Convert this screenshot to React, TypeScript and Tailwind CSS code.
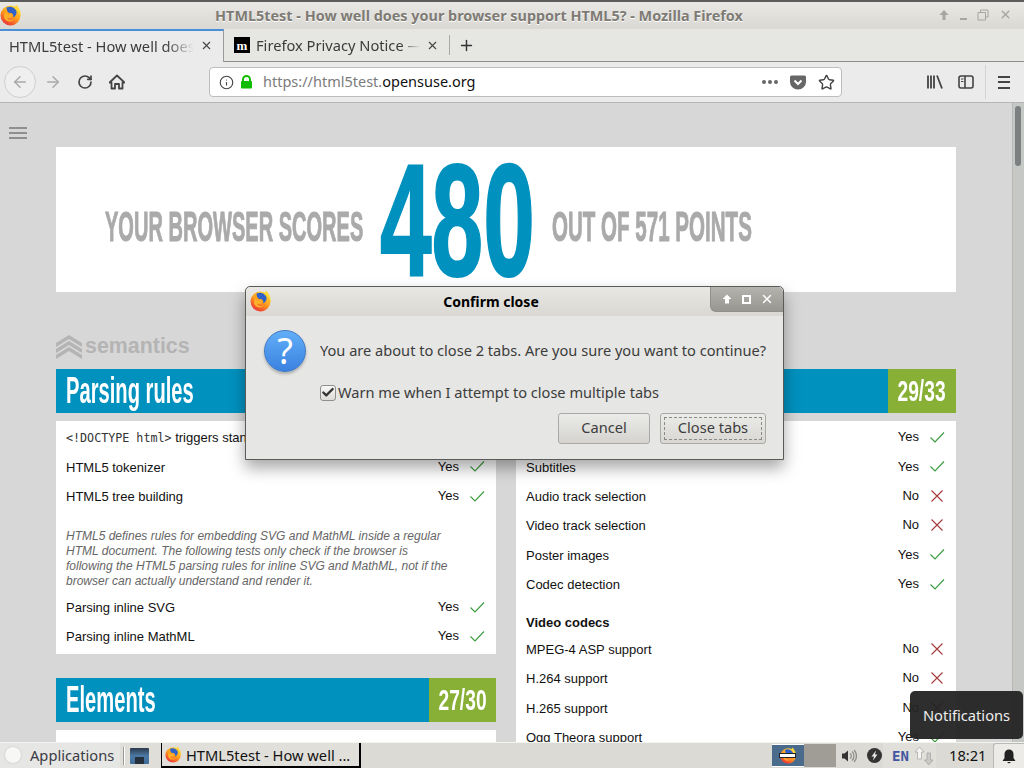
import { ArrowLeft, ArrowRight, RotateCw, Info, Star, Plus, X, Check } from "lucide-react";

const uiFont = "font-['Noto_Sans','Open_Sans',sans-serif]";
const pageFont = "font-['Liberation_Sans',Arial,sans-serif]";

const videoRows: [string, boolean][] = [
  ["Video element", true],
  ["Subtitles", true],
  ["Audio track selection", false],
  ["Video track selection", false],
  ["Poster images", true],
  ["Codec detection", true],
];

const codecRows: [string, boolean][] = [
  ["MPEG-4 ASP support", false],
  ["H.264 support", false],
  ["H.265 support", false],
  ["Ogg Theora support", true],
];

function FirefoxLogo({ size = 22 }: { size?: number }) {
  return (
    <svg width={size} height={size} viewBox="0 0 22 22">
      <defs>
        <linearGradient id="fxOuter" x1="0.8" y1="0" x2="0.2" y2="1">
          <stop offset="0" stopColor="#ffe03a" />
          <stop offset="0.5" stopColor="#ff9a1c" />
          <stop offset="1" stopColor="#e8263c" />
        </linearGradient>
      </defs>
      <circle cx="10.5" cy="11.5" r="10" fill="url(#fxOuter)" />
      <path d="M16 0.5 C18.5 3 21.5 7 20.5 12 C19.5 8 17.5 5.5 14.5 4 Z" fill="#ffd93a" />
      <path d="M6.5 3.5 C10 1.8 14.5 3 16.5 7 C17 10 15.5 12.5 13 13.5 C14 11 12.5 9 10 9 C8 9 6.5 7 6.5 3.5 Z" fill="#2f62c8" />
      <path d="M5 8 C6.5 10 8.5 10.5 10.5 10.5 C12 10.5 12.5 12 11.5 13 C10 14.5 8 14 7 13.5 C8 16 11 17 14 15.5 C11.5 18.5 6.5 18 4.5 14.5 C3.8 12.5 4 10 5 8 Z" fill="#ffb02a" />
    </svg>
  );
}

function ResultMark({ ok }: { ok: boolean }) {
  return ok ? (
    <svg width="16" height="16" viewBox="0 0 16 16" className="ml-[10px] shrink-0">
      <path d="M1.5 8.5 L6 13 L15 3.5" fill="none" stroke="#3a9a3e" strokeWidth="1.1" />
    </svg>
  ) : (
    <svg width="16" height="16" viewBox="0 0 16 16" className="ml-[10px] shrink-0">
      <path d="M2.5 2.5 L13.5 13.5 M13.5 2.5 L2.5 13.5" fill="none" stroke="#a23a3a" strokeWidth="1.1" />
    </svg>
  );
}

function TestRow({ label, ok, mono }: { label: string; ok: boolean; mono?: boolean }) {
  return (
    <div className="flex h-[29.3px] items-center pl-[10px] pr-[11px] text-[13px] text-[#111]">
      <div className="flex-1 whitespace-nowrap">
        {mono ? (
          <>
            <code className="font-['DejaVu_Sans_Mono',monospace] text-[11.7px] text-[#333]">&lt;!DOCTYPE html&gt;</code> triggers standards mode
          </>
        ) : (
          label
        )}
      </div>
      <div className="relative -top-px flex items-center">
        <span>{ok ? "Yes" : "No"}</span>
        <ResultMark ok={ok} />
      </div>
    </div>
  );
}

function SectionHeader({ title, score, scoreWidth }: { title: string; score: string; scoreWidth: string }) {
  return (
    <div className="flex h-11 bg-[#0091bf] text-white">
      <div className="flex-1 overflow-hidden pl-[10px]">
        <div className="origin-left scale-x-[0.56] whitespace-nowrap text-[36px] font-bold leading-[44px]">{title}</div>
      </div>
      <div className={`${scoreWidth} flex items-center justify-center overflow-hidden bg-[#89b036]`}>
        <span className="scale-x-[0.64] whitespace-nowrap text-[30px] font-bold leading-[44px]">{score}</span>
      </div>
    </div>
  );
}

function TitleButtons() {
  return (
    <div className="flex items-center gap-[10px] pr-[12px] text-[#a9a69f]">
      <svg width="12" height="12" viewBox="0 0 12 12">
        <path d="M6 1 L10.5 6 H7.5 V11 H4.5 V6 H1.5 Z" fill="currentColor" />
      </svg>
      <div className="mt-[9px] h-[2px] w-[7px] bg-current" />
      <svg width="12" height="12" viewBox="0 0 12 12">
        <path d="M3.5 3 V1 H11 V8 H8.5 M1 3.5 H8.5 V11 H1 Z" fill="none" stroke="currentColor" />
      </svg>
      <X size={13} strokeWidth={2.5} />
    </div>
  );
}

function ConfirmDialog() {
  return (
    <div className={`${uiFont} absolute left-[245px] top-[286px] h-[174px] w-[539px] rounded-t-[5px] border border-[#5a5a58] bg-[#e6e6e4] shadow-[0_8px_16px_rgba(0,0,0,0.35)]`}>
      <div className="relative flex h-[29px] items-center justify-center rounded-t-[5px] bg-gradient-to-b from-[#e8e7e3] to-[#d9d8d3]">
        <div className="absolute left-[4px] top-[3px]">
          <FirefoxLogo size={22} />
        </div>
        <span className="-ml-[47px] text-[14px] font-bold text-black">Confirm close</span>
        <div className="absolute right-0 top-0 flex h-[25px] w-[73px] items-center justify-center gap-[9px] rounded-bl-[6px] rounded-tr-[5px] border-b border-l border-[#8f8f8b] bg-gradient-to-b from-[#b4b3ae] to-[#97968f] text-white">
          <svg width="12" height="12" viewBox="0 0 12 12">
            <path d="M6 1.5 L10.5 6 H8 V10.5 H4 V6 H1.5 Z" fill="currentColor" />
          </svg>
          <div className="h-[9px] w-[9px] border-2 border-white" />
          <X size={14} strokeWidth={2.5} />
        </div>
      </div>
      <div className="flex items-start pl-[18px] pr-[16px] pt-[14px]">
        <div className="flex h-[42px] w-[42px] shrink-0 items-center justify-center rounded-full border border-[#3f79c4] bg-gradient-to-b from-[#62aef8] to-[#3b82e0] shadow-[0_2px_3px_rgba(0,0,0,0.25)]">
          <span className="text-[36px] font-normal leading-none text-white">?</span>
        </div>
        <div className="ml-[14px] whitespace-nowrap pt-[10px] text-[14.6px] leading-[20px] text-[#3c3c3c]">
          You are about to close 2 tabs. Are you sure you want to continue?
        </div>
      </div>
      <div className="mt-[10px] flex items-center pl-[74px] text-[14.6px] text-[#3c3c3c]">
        <div className="flex h-[16px] w-[16px] items-center justify-center rounded-[3px] border border-[#8f8f8b] bg-gradient-to-b from-[#f8f8f7] to-[#dddcd8]">
          <Check size={15} strokeWidth={4} className="text-[#333]" />
        </div>
        <span className="ml-[2px]">Warn me when I attempt to close multiple tabs</span>
      </div>
      <div className="mt-[9px] flex justify-end gap-[10px] pr-[17px] text-[14.6px] text-[#3c3c3c]">
        <div className="flex h-[31px] w-[92px] items-center justify-center rounded-[3px] border border-[#aaa9a5] bg-gradient-to-b from-[#ebebe9] to-[#d4d3cf]">Cancel</div>
        <div className="flex h-[31px] w-[106px] items-center justify-center rounded-[3px] border border-[#aaa9a5] bg-gradient-to-b from-[#ebebe9] to-[#d8d7d3] p-[3px]">
          <div className="flex h-full w-full items-center justify-center border border-dashed border-[#8a8a86]">Close tabs</div>
        </div>
      </div>
    </div>
  );
}

function Chrome() {
  return (
    <div className={uiFont}>
      {/* window title */}
      <div className="relative flex h-[29px] items-center justify-center border-t-2 border-[#5c5c5a] bg-gradient-to-b from-[#e9e8e4] to-[#d9d8d3]">
        <div className="absolute left-0 top-[2px]">
          <FirefoxLogo size={22} />
        </div>
        <span className="-ml-[66px] text-[14.4px] font-bold text-[#7e7a74] [text-shadow:0_1px_0_#fff]">
          HTML5test - How well does your browser support HTML5? - Mozilla Firefox
        </span>
        <div className="absolute right-0 top-[6px]">
          <TitleButtons />
        </div>
      </div>

      {/* tabs */}
      <div className="flex h-[33px] bg-[#e6e6e3] text-[14.67px] text-[#3b3b3b]">
        <div className="flex w-[224px] items-center border-r border-t-2 border-r-[#9a9a98] border-t-[#4a90d9] bg-[#ebebeb] pb-[2px] pl-[9px] pr-[10px]">
          <span className="min-w-0 flex-1 overflow-hidden whitespace-nowrap [mask-image:linear-gradient(to_right,black_85%,transparent)]">HTML5test - How well does</span>
          <X size={13} strokeWidth={2} className="ml-[6px] shrink-0 text-[#444]" />
        </div>
        <div className="flex w-[225px] items-center border-b border-[#8e8e8c] pl-[10px] pr-[10px]">
          <div className="flex h-[16px] w-[16px] shrink-0 items-center justify-center bg-black font-['Liberation_Serif',serif] text-[13px] font-bold leading-none text-white">m</div>
          <span className="ml-[6px] min-w-0 flex-1 overflow-hidden whitespace-nowrap [mask-image:linear-gradient(to_right,black_88%,transparent)]">Firefox Privacy Notice —</span>
          <X size={13} strokeWidth={2} className="ml-[6px] shrink-0 text-[#444]" />
        </div>
        <div className="flex flex-1 items-center border-b border-[#8e8e8c]">
          <div className="h-[20px] w-px bg-[#a8a8a6]" />
          <Plus size={17} strokeWidth={2} className="ml-[8px] text-[#333]" />
        </div>
      </div>

      {/* nav bar */}
      <div className="flex h-[41px] items-center border-b border-[#b5b5b3] bg-[#ebebeb]">
        <div className="ml-[4px] flex h-[32px] w-[32px] items-center justify-center rounded-full border border-[#cfcfcd] bg-[#efefef]">
          <ArrowLeft size={18} className="text-[#a9a9a9]" />
        </div>
        <ArrowRight size={18} className="ml-[8px] text-[#a9a9a9]" />
        <RotateCw size={16} strokeWidth={2.5} className="ml-[15px] text-[#444]" />
        <svg width="16" height="16" viewBox="0 0 16 16" className="ml-[16px]">
          <path d="M8 1.5 L15.5 8.5 H13.5 V14.5 H10 V10 H6 V14.5 H2.5 V8.5 H0.5 Z" fill="none" stroke="#444" strokeWidth="1.8" strokeLinejoin="round" />
        </svg>
        <div className="ml-[84px] flex h-[30px] w-[633px] items-center rounded-[4px] border border-[#bdbdbb] bg-white pl-[9px] pr-[6px] text-[14.5px]">
          <Info size={15} strokeWidth={1.8} className="text-[#444]" />
          <svg width="13" height="14" viewBox="0 0 13 14" className="ml-[6px]">
            <path d="M3 6 V4.5 A3.5 3.5 0 0 1 10 4.5 V6" fill="none" stroke="#12bc00" strokeWidth="2" />
            <rect x="1" y="6" width="11" height="7.5" rx="1" fill="#12bc00" />
          </svg>
          <span className="ml-[10px] text-[#7c7c7c]">https://html5test.</span>
          <span className="text-[#111]">opensuse.org</span>
          <div className="flex-1" />
          <div className="flex gap-[2px]">
            <div className="h-[4px] w-[4px] rounded-full bg-[#666]" />
            <div className="h-[4px] w-[4px] rounded-full bg-[#666]" />
            <div className="h-[4px] w-[4px] rounded-full bg-[#666]" />
          </div>
          <svg width="16" height="15" viewBox="0 0 16 15" className="ml-[12px]">
            <path d="M1.5 0.5 H14.5 A1.5 1.5 0 0 1 16 2 V7 A8 7.5 0 0 1 0 7 V2 A1.5 1.5 0 0 1 1.5 0.5 Z" fill="#666" />
            <path d="M4.5 5.5 L8 9 L11.5 5.5" fill="none" stroke="#fff" strokeWidth="2" />
          </svg>
          <Star size={17} strokeWidth={2} className="ml-[12px] text-[#444]" />
        </div>
        <svg width="16" height="16" viewBox="0 0 16 16" className="ml-[85px]">
          <path d="M1 1.5 V14.5 M4 1.5 V14.5 M7 1.5 V14.5 M10 1.5 L15 14.5" fill="none" stroke="#444" strokeWidth="1.8" />
        </svg>
        <svg width="16" height="14" viewBox="0 0 16 14" className="ml-[15px]">
          <rect x="1" y="1" width="14" height="12" rx="2" fill="none" stroke="#444" strokeWidth="1.6" />
          <path d="M7 1 V13" stroke="#444" strokeWidth="1.6" />
          <path d="M3 4 H5.5 M3 6.5 H5.5" stroke="#444" strokeWidth="1.2" />
        </svg>
        <div className="ml-[11px] h-[34px] w-px bg-[#d4d4d2]" />
        <div className="ml-[12px] flex flex-col gap-[3.5px]">
          <div className="h-[2px] w-[12px] bg-[#444]" />
          <div className="h-[2px] w-[12px] bg-[#444]" />
          <div className="h-[2px] w-[12px] bg-[#444]" />
        </div>
      </div>
    </div>
  );
}

function Taskbar() {
  return (
    <div className={`${uiFont} flex h-[26px] border-t border-[#f3f3f1] bg-[#dcdad5] text-[14.67px]`}>
      <div className="flex w-[120px] items-center bg-[#e6e6e4] pb-[1px] pl-[5px] text-[#3a3a44]">
        <div className="h-[16px] w-[16px] rounded-full bg-[#f7f7f5] shadow-[0_0_2px_#bbb]" />
        <span className="ml-[9px]">Applications</span>
      </div>
      <div className="flex w-[41px] items-center bg-[#dfded9] pl-[3px]">
        <div className="h-[18px] w-[2px] border-l border-[#999] bg-white" />
        <div className="ml-[5px] h-[16px] w-[19px] rounded-[1px] bg-gradient-to-b from-[#2c3a4c] via-[#4c7aa6] to-[#3e6a96]">
          <div className="mx-auto mt-[9px] h-[7px] w-[9px] bg-[#24303e]" />
        </div>
      </div>
      <div className="flex h-[25px] w-[200px] items-center border-b-2 border-l border-r-2 border-black bg-[#e1dfda] pl-[3px] text-[#111]">
        <FirefoxLogo size={17} />
        <span className="ml-[4px] whitespace-nowrap">HTML5test - How well ...</span>
      </div>
      <div className="flex-1" />
      <div className="flex w-[252px] items-center">
        <div className="flex h-[23px] w-[32px] items-center justify-center border-y border-white bg-[#4a6b8c]">
          <div className="relative">
            <FirefoxLogo size={17} />
            <div className="absolute left-[-1px] top-[6px] h-[5px] w-[17px] border border-[#222] bg-white" />
          </div>
        </div>
        <div className="h-[23px] w-[32px] bg-[#a09c96]" />
        <svg width="16" height="14" viewBox="0 0 16 14" className="ml-[5px]">
          <path d="M1 4.5 H3.5 L7 1.5 V12.5 L3.5 9.5 H1 Z" fill="#333" />
          <path d="M9 4.5 A3 3 0 0 1 9 9.5 M11 2.5 A6 6 0 0 1 11 11.5 M13 1 A8.5 8.5 0 0 1 13 13" fill="none" stroke="#8a8a88" strokeWidth="1.2" />
        </svg>
        <svg width="15" height="15" viewBox="0 0 15 15" className="ml-[10px]">
          <circle cx="7.5" cy="7.5" r="7.5" fill="#333" />
          <path d="M9 2.5 L4.5 8.5 H7 L6 12.5 L10.5 6.5 H8 Z" fill="#e6e6e4" />
        </svg>
        <div className="ml-[1px] flex h-full w-[53px] items-center bg-[#e0dfda] pl-[9px]">
          <span className="text-[14px] font-bold leading-none text-[#4355a0] [font-family:'DejaVu_Sans_Mono',monospace]">EN</span>
          <svg width="20" height="20" viewBox="0 0 20 20" className="ml-[5px] shrink-0">
            <path d="M5.5 1 L10 6 H7.5 V13 H3.5 V6 H1 Z" fill="#f4f4f2" stroke="#999" strokeWidth="0.6" />
            <path d="M13 7 H16.5 V14 H19 L14.8 19 L10.5 14 H13 Z" fill="#c9c9c5" stroke="#999" strokeWidth="0.6" />
          </svg>
        </div>
        <span className="ml-[13px] pb-[1px] text-[14.67px] text-[#111]">18:21</span>
        <div className="ml-[7px] flex h-full flex-1 items-center justify-center rounded-tl-[3px] border-l border-t border-[#b8b8b4] bg-[#ecebe8]">
          <svg width="14" height="15" viewBox="0 0 14 15">
            <path d="M7 0.5 A4.5 4.5 0 0 1 11.5 5 V9 L13.5 12 H0.5 L2.5 9 V5 A4.5 4.5 0 0 1 7 0.5 Z M5.3 13 H8.7 A1.8 1.8 0 0 1 5.3 13 Z" fill="#222" />
          </svg>
        </div>
      </div>
    </div>
  );
}

export default function App() {
  return (
    <div className="relative h-[768px] w-[1024px] overflow-hidden bg-[#d7d7d7]">
      <Chrome />

      <div className="flex h-[639px]">
        {/* page */}
        <div className={`${pageFont} w-[1012px] overflow-hidden px-[56px]`}>
          <div className="-ml-[47px] flex h-[44px] flex-col justify-end gap-[3px] pb-[8px]">
            <div className="h-[2px] w-[18px] bg-[#8f8f8f]" />
            <div className="h-[2px] w-[18px] bg-[#8f8f8f]" />
            <div className="h-[2px] w-[18px] bg-[#8f8f8f]" />
          </div>

          {/* score */}
          <div className="flex h-[145px] w-[900px] items-center bg-white pl-[49px]">
            <div className="mt-[14px] w-[275px] origin-left scale-x-[0.466] whitespace-nowrap text-[43px] font-bold text-[#aaaaaa] [-webkit-text-stroke:1px_#aaaaaa]">
              YOUR BROWSER SCORES
            </div>
            <div className="w-[172px] origin-left scale-x-[0.58] whitespace-nowrap text-[160px] font-bold leading-[145px] text-[#0091bf] [-webkit-text-stroke:2px_#0091bf]">
              480
            </div>
            <div className="mt-[14px] origin-left scale-x-[0.478] whitespace-nowrap text-[43px] font-bold text-[#aaaaaa] [-webkit-text-stroke:1px_#aaaaaa]">
              OUT OF 571 POINTS
            </div>
          </div>

          {/* semantics */}
          <div className="mt-[42px] flex h-[26px] items-center text-[#b4b4b4]">
            <svg width="26" height="26" viewBox="0 0 26 26">
              <path d="M0 9 L13 1 L26 9 V13 L13 5 L0 13 Z M0 15 L13 7 L26 15 V19 L13 11 L0 19 Z M0 21 L13 13 L26 21 V25 L13 17 L0 25 Z" fill="#b4b4b4" />
            </svg>
            <span className="ml-[3px] pb-[2px] text-[21.4px] font-bold">semantics</span>
          </div>

          <div className="mt-[9px] grid grid-cols-[440px_440px] gap-x-[20px]">
            <div>
              <SectionHeader title="Parsing rules" score="26/30" scoreWidth="w-[68px]" />
              <div className="mt-[8px] bg-white pb-[2.5px] pt-[2.5px]">
                <TestRow label="" ok mono />
                <TestRow label="HTML5 tokenizer" ok />
                <TestRow label="HTML5 tree building" ok />
                <div className="mb-[3.5px] mt-[18px] pl-[10px] pr-[20px] text-[12px] italic leading-[15px] text-[#666]">
                  HTML5 defines rules for embedding SVG and MathML inside a regular
                  <br />
                  HTML document. The following tests only check if the browser is
                  <br />
                  following the HTML5 parsing rules for inline SVG and MathML, not if the
                  <br />
                  browser can actually understand and render it.
                </div>
                <TestRow label="Parsing inline SVG" ok />
                <TestRow label="Parsing inline MathML" ok />
              </div>
              <div className="mt-[24px]">
                <SectionHeader title="Elements" score="27/30" scoreWidth="w-[67px]" />
              </div>
              <div className="mt-[8px] h-[40px] bg-white" />
            </div>

            <div>
              <SectionHeader title="Video" score="29/33" scoreWidth="w-[68px]" />
              <div className="mt-[8px] bg-white pt-[2.5px]">
                {videoRows.map(([label, ok]) => (
                  <TestRow key={label} label={label} ok={ok} />
                ))}
                <div className="mb-[1px] mt-[16px] h-[19px] pl-[10px] text-[13px] font-bold leading-[16px] text-[#111]">Video codecs</div>
                {codecRows.map(([label, ok]) => (
                  <TestRow key={label} label={label} ok={ok} />
                ))}
              </div>
            </div>
          </div>
        </div>

        {/* scrollbar */}
        <div className="w-[12px] border-l border-[#b8b8b6] bg-[#c6c8c6] pl-[2px] pt-[3px]">
          <div className="h-[60px] w-[6px] rounded-[3px] bg-[#7c8080]" />
        </div>
      </div>

      <Taskbar />

      <ConfirmDialog />

      <div className={`${uiFont} absolute left-[910px] top-[691px] flex h-[48px] w-[113px] items-center justify-center rounded-[5px] bg-[#232323]/95 text-[14.67px] text-[#eee]`}>
        Notifications
      </div>
    </div>
  );
}
